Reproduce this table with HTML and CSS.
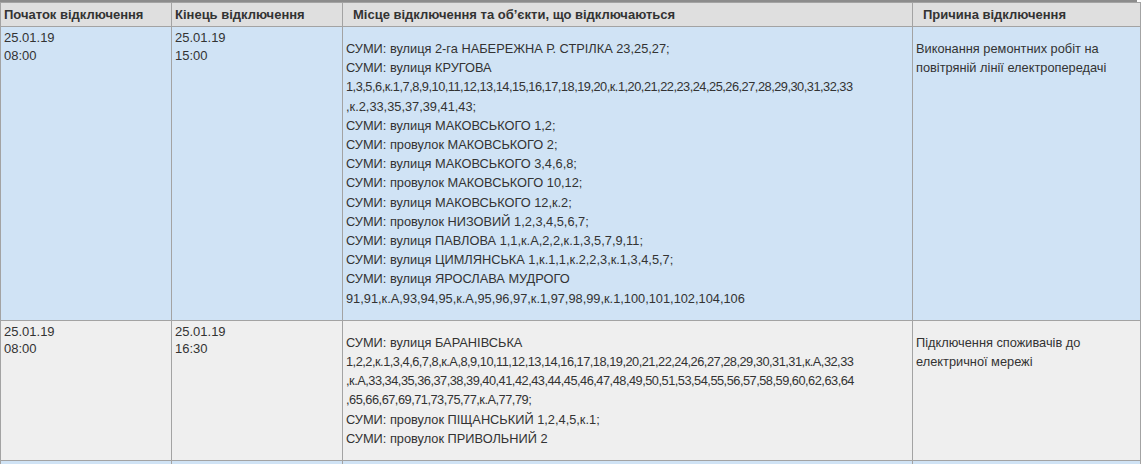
FILE: index.html
```html
<!DOCTYPE html>
<html lang="uk">
<head>
  <meta charset="UTF-8">
  <title>Відключення</title>
  <link rel="stylesheet" href="styles.css">
</head>
<body>
  <div class="top-strip"></div>
  <table class="outages">
    <colgroup>
      <col class="c-start">
      <col class="c-end">
      <col class="c-place">
      <col class="c-reason">
    </colgroup>
    <thead>
      <tr>
        <th>Початок відключення</th>
        <th>Кінець відключення</th>
        <th class="wide">Місце відключення та об’єкти, що відключаються</th>
        <th class="wide">Причина відключення</th>
      </tr>
    </thead>
    <tbody>
      <tr class="row-blue">
        <td>25.01.19<br>08:00</td>
        <td>25.01.19<br>15:00</td>
        <td><p>СУМИ: вулиця 2-га НАБЕРЕЖНА Р. СТРІЛКА 23,25,27;<br>
          СУМИ: вулиця КРУГОВА<br>
          <span class="houses">1,3,5,6,к.1,7,8,9,10,11,12,13,14,15,16,17,18,19,20,к.1,20,21,22,23,24,25,26,27,28,29,30,31,32,33</span><br>
          ,к.2,33,35,37,39,41,43;<br>
          СУМИ: вулиця МАКОВСЬКОГО 1,2;<br>
          СУМИ: провулок МАКОВСЬКОГО 2;<br>
          СУМИ: вулиця МАКОВСЬКОГО 3,4,6,8;<br>
          СУМИ: провулок МАКОВСЬКОГО 10,12;<br>
          СУМИ: вулиця МАКОВСЬКОГО 12,к.2;<br>
          СУМИ: провулок НИЗОВИЙ 1,2,3,4,5,6,7;<br>
          СУМИ: вулиця ПАВЛОВА 1,1,к.А,2,2,к.1,3,5,7,9,11;<br>
          СУМИ: вулиця ЦИМЛЯНСЬКА 1,к.1,1,к.2,2,3,к.1,3,4,5,7;<br>
          СУМИ: вулиця ЯРОСЛАВА МУДРОГО<br>
          91,91,к.А,93,94,95,к.А,95,96,97,к.1,97,98,99,к.1,100,101,102,104,106</p></td>
        <td><p>Виконання ремонтних робіт на<br>повітряній лінії електропередачі</p></td>
      </tr>
      <tr class="row-grey">
        <td>25.01.19<br>08:00</td>
        <td>25.01.19<br>16:30</td>
        <td><p>СУМИ: вулиця БАРАНІВСЬКА<br>
          <span class="houses">1,2,2,к.1,3,4,6,7,8,к.А,8,9,10,11,12,13,14,16,17,18,19,20,21,22,24,26,27,28,29,30,31,31,к.А,32,33<br>
          ,к.А,33,34,35,36,37,38,39,40,41,42,43,44,45,46,47,48,49,50,51,53,54,55,56,57,58,59,60,62,63,64<br>
          ,65,66,67,69,71,73,75,77,к.А,77,79;</span><br>
          СУМИ: провулок ПІЩАНСЬКИЙ 1,2,4,5,к.1;<br>
          СУМИ: провулок ПРИВОЛЬНИЙ 2</p></td>
        <td><p>Підключення споживачів до<br>електричної мережі</p></td>
      </tr>
      <tr class="row-blue">
        <td>&nbsp;</td>
        <td>&nbsp;</td>
        <td>&nbsp;</td>
        <td>&nbsp;</td>
      </tr>
    </tbody>
  </table>
</body>
</html>
```

FILE: styles.css
```css
* {
  box-sizing: border-box;
}

body {
  margin: 0;
  font-family: "Liberation Sans", Arial, sans-serif;
  font-size: 13px;
  color: #333;
  background: #fff;
  overflow: hidden;
}

.top-strip {
  width: 1137px;
  height: 2px;
  background: #8c8c8c;
}

.outages {
  width: 1140px;
  border-collapse: collapse;
  table-layout: fixed;
}

.c-start,
.c-end {
  width: 171px;
}

.c-place {
  width: 570px;
}

.c-reason {
  width: 228px;
}

.outages th,
.outages td {
  border: 1px solid #a3a3a3;
  padding: 2px 3px;
  text-align: left;
  vertical-align: top;
  line-height: 17.5px;
}

.outages th {
  background: #dfdfdf;
  font-weight: bold;
  padding-top: 3px;
  padding-bottom: 3px;
  line-height: 17px;
  color: #333;
}

.outages th.wide {
  padding-left: 10px;
}

.outages td p {
  margin: 10px 0;
  font-size: 12.8px;
  line-height: 19.2px;
}

/* the long house number lists sit tighter than the street names */
.houses {
  letter-spacing: -0.5px;
}

.row-blue td {
  background: #d0e3f5;
}

.row-grey td {
  background: #efefef;
}
```
